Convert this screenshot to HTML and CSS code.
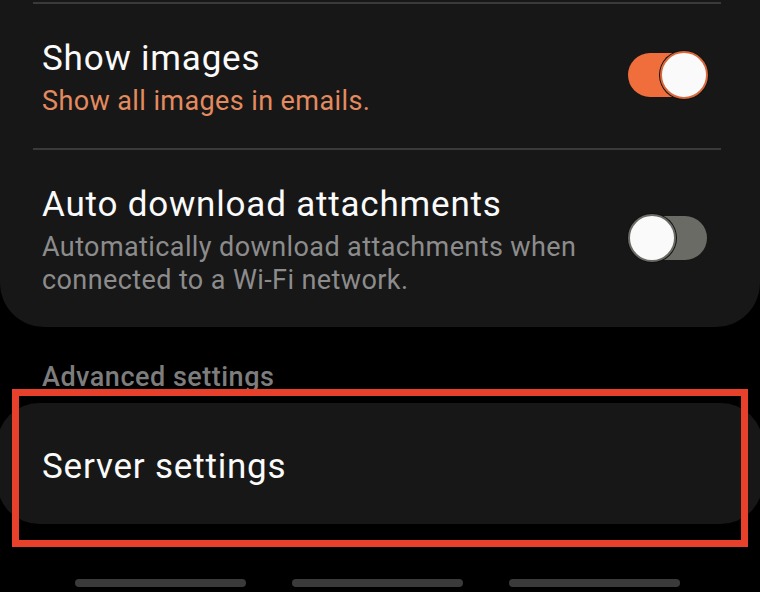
FILE: index.html
```html
<!DOCTYPE html>
<html lang="en">
  <head>
    <meta charset="UTF-8" />
    <meta name="viewport" content="width=device-width, initial-scale=1.0" />
    <title>Email settings</title>
    <link rel="stylesheet" href="styles.css">
  </head>
  <body>
    <div class="card">
      <div class="row">
        <div class="text">
          <div class="title">Show images</div>
          <div class="sub on">Show all images in emails.</div>
        </div>
        <div class="switch checked"><span class="knob"></span></div>
      </div>
      <div class="row">
        <div class="text">
          <div class="title">Auto download attachments</div>
          <div class="sub">Automatically download attachments when connected to a Wi-Fi network.</div>
        </div>
        <div class="switch"><span class="knob"></span></div>
      </div>
    </div>

    <div class="section">
      <div class="header">Advanced settings</div>
      <div class="card single">
        <div class="title">Server settings</div>
      </div>
      <div class="mark"></div>
    </div>

    <div class="navbar">
      <span></span>
      <span></span>
      <span></span>
    </div>
  </body>
</html>
```

FILE: styles.css
```css
body {
  margin: 0;
  background: #000;
  font-family: Roboto, "Liberation Sans", sans-serif;
  width: 760px;
  height: 592px;
  overflow: hidden;
}
.card {
  background: #171717;
  border-radius: 0 0 44px 44px;
  padding: 2px 39px 0 33px;
}
.row {
  display: flex;
  align-items: center;
  border-top: 2px solid #3a3a3a;
  padding: 35px 14px 30px 9px;
}
.text {
  flex: 1;
  margin-right: 40px;
}
.title {
  color: #fafafa;
  font-size: 35px;
  line-height: 40px;
  letter-spacing: 0.8px;
}
.sub {
  color: #8c8c8c;
  font-size: 27px;
  line-height: 33px;
  letter-spacing: 0.4px;
  margin-top: 6px;
}
.sub.on {
  color: #e38a5f;
}
.switch {
  position: relative;
  width: 79px;
  height: 44px;
  border-radius: 22px;
  background: #6b6b66;
  margin-bottom: 7px;
}
.switch.checked {
  background: #ef6e3b;
}
.knob {
  position: absolute;
  top: -2px;
  left: 0;
  width: 44px;
  height: 44px;
  border-radius: 50%;
  background: #fafafa;
  border: 2px solid #6b6b66;
  box-shadow: 0 0 0 1px #111;
}
.switch.checked .knob {
  left: auto;
  right: -1px;
  border-color: #d9683c;
}
.section {
  position: relative;
  padding-top: 35px;
}
.header {
  color: #7d7d7d;
  font-size: 27px;
  font-weight: 500;
  line-height: 30px;
  letter-spacing: 0.5px;
  padding-left: 42px;
  margin-bottom: 11px;
}
.card.single {
  border-radius: 42px;
  margin: 0 -3px;
  padding: 44px 45px 37px;
}
.mark {
  position: absolute;
  left: 12px;
  top: 62px;
  width: 722px;
  height: 144px;
  border: 7px solid #e8412b;
}
.navbar {
  display: flex;
  gap: 46px;
  padding-left: 75px;
  margin-top: 55px;
}
.navbar span {
  width: 171px;
  height: 8px;
  border-radius: 4px;
  background: #3a3a3a;
}
```
